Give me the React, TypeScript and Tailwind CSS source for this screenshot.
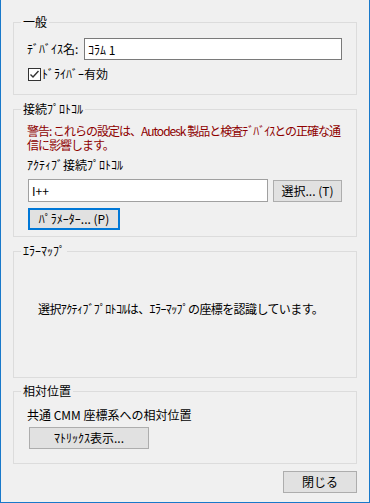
import React from 'react';

const font = { fontFamily: '"Noto Sans CJK JP", "Noto Sans", sans-serif' };

const GroupBox: React.FC<{ title: string; className?: string; children: React.ReactNode }> = ({ title, className, children }) => (
    <fieldset className={`border border-[#dcdcdc] min-w-0 px-0 ${className ?? ''}`}>
        <legend className="ml-[7px] px-[2px] text-[12px] leading-[14px] whitespace-nowrap">{title}</legend>
        {children}
    </fieldset>
);

const Button: React.FC<{ label: string; className?: string; focused?: boolean }> = ({ label, className, focused }) => (
    <button
        type="button"
        className={`h-[22px] bg-[#e1e1e1] text-[12px] leading-none text-black whitespace-nowrap flex items-center justify-center ${
            focused ? 'border-2 border-[#0078d7]' : 'border border-[#adadad]'
        } ${className ?? ''}`}
    >
        {label}
    </button>
);

export default function App() {
    return (
        <div
            className="w-[370px] h-[503px] bg-[#f0f0f0] border-l border-r border-b border-[#1979ca] px-[12px] pt-[15px] text-black text-[12px]"
            style={font}
        >
            <GroupBox title="一般" className="h-[80px]">
                <div className="pl-[13px] pr-[14px] pt-[9px]">
                    <div className="flex items-center">
                        <span className="w-[57px] whitespace-nowrap">ﾃﾞﾊﾞｲｽ名:</span>
                        <input
                            readOnly
                            value="ｺﾗﾑ 1"
                            className="flex-1 min-w-0 h-[22px] border border-[#7a7a7a] bg-white px-[3px] text-[12px] outline-none"
                        />
                    </div>
                    <label className="flex items-center mt-[5px] ml-[1px]">
                        <span className="w-[13px] h-[13px] border border-[#333] bg-white flex items-center justify-center">
                            <svg width="11" height="11" viewBox="0 0 11 11">
                                <path d="M1.5 5.5 L4 8 L9.5 2" fill="none" stroke="#333" strokeWidth="1.4" />
                            </svg>
                        </span>
                        <span className="ml-[1px] whitespace-nowrap">ﾄﾞﾗｲﾊﾞｰ有効</span>
                    </label>
                </div>
            </GroupBox>

            <GroupBox title="接続ﾌﾟﾛﾄｺﾙ" className="mt-[7px] h-[135px]">
                <div className="pl-[13px] pr-[14px] pt-[8px]">
                    <div className="text-[#8e0000] leading-[14px] tracking-[-1px] whitespace-nowrap">
                        <div>警告: これらの設定は、Autodesk 製品と検査ﾃﾞﾊﾞｲｽとの正確な通</div>
                        <div>信に影響します。</div>
                    </div>
                    <p className="mt-[6px] leading-[14px] whitespace-nowrap">ｱｸﾃｨﾌﾞ接続ﾌﾟﾛﾄｺﾙ</p>
                    <div className="flex items-center mt-[7px]">
                        <input
                            readOnly
                            value="I++"
                            className="w-[240px] ml-[1px] h-[23px] border border-[#a0a0a0] bg-white px-[3px] text-[12px] outline-none"
                        />
                        <Button label="選択... (T)" className="ml-[5px] w-[69px]" />
                    </div>
                    <Button label="ﾊﾟﾗﾒｰﾀｰ... (P)" focused className="mt-[6px] ml-[1px] w-[92px]" />
                </div>
            </GroupBox>

            <GroupBox title="ｴﾗｰﾏｯﾌﾟ" className="mt-[7px] h-[134px]">
                <p className="pl-[24px] pt-[42px] tracking-[-0.6px] whitespace-nowrap">
                    選択ｱｸﾃｨﾌﾞﾌﾟﾛﾄｺﾙは、ｴﾗｰﾏｯﾌﾟの座標を認識しています。
                </p>
            </GroupBox>

            <GroupBox title="相対位置" className="mt-[6px] h-[80px]">
                <div className="pl-[13px] pt-[10px]">
                    <p className="leading-[14px]">共通 CMM 座標系への相対位置</p>
                    <Button label="ﾏﾄﾘｯｸｽ表示..." className="mt-[5px] ml-[2px] w-[120px]" />
                </div>
            </GroupBox>

            <div className="flex justify-end mt-[7px]">
                <Button label="閉じる" className="w-[74px] h-[21px]" />
            </div>
        </div>
    );
}
